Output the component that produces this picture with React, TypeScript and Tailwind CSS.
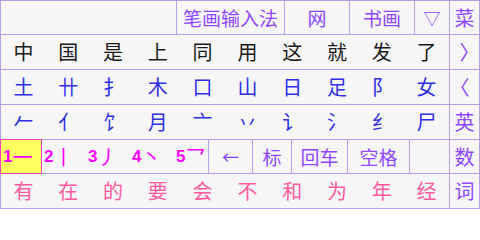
import React from "react";

const cjk = "font-['Noto_Sans_CJK_SC',sans-serif]";

function Cell({ ch, color }: { ch: string; color: string }) {
  return (
    <div className={`flex-1 flex items-center justify-center text-[20px] leading-none ${color}`}>
      {ch}
    </div>
  );
}

function Side({ ch, extra = "" }: { ch: string; extra?: string }) {
  return (
    <div className={`w-[30px] shrink-0 border-l border-[#b99cf3] flex items-center justify-center text-[20px] leading-none text-[#9147ff] ${extra}`}>
      {ch}
    </div>
  );
}

export default function App() {
  const row2 = ["中", "国", "是", "上", "同", "用", "这", "就", "发", "了"];
  const row3 = ["土", "卄", "扌", "木", "口", "山", "日", "足", "阝", "女"];
  const row4 = ["𠂉", "亻", "饣", "月", "亠", "丷", "讠", "氵", "纟", "尸"];
  const row6 = ["有", "在", "的", "要", "会", "不", "和", "为", "年", "经"];
  const strokes = [
    ["2", "丨"],
    ["3", "丿"],
    ["4", "丶"],
    ["5", "乛"],
  ];
  return (
    <div className={`w-[480px] h-[209px] bg-[#f6f6f6] border border-[#b99cf3] flex flex-col ${cjk}`}>
      {/* row 1 */}
      <div className="h-[34px] border-b border-[#b99cf3] flex">
        <div className="w-[448px] flex text-[#9147ff] text-[19px] leading-none">
          <div className="w-[176px] border-r border-[#b99cf3]" />
          <div className="w-[108px] border-r border-[#b99cf3] flex items-center justify-center">笔画输入法</div>
          <div className="w-[65px] border-r border-[#b99cf3] flex items-center justify-center">网</div>
          <div className="w-[65px] border-r border-[#b99cf3] flex items-center justify-center">书画</div>
          <div className="flex-1 flex items-center justify-center text-[17px]">▽</div>
        </div>
        <Side ch="菜" />
      </div>
      {/* row 2 */}
      <div className="h-[35px] border-b border-[#b99cf3] flex">
        <div className="w-[448px] flex">
          {row2.map((c) => (
            <Cell key={c} ch={c} color="text-[#1a1a1a]" />
          ))}
        </div>
        <Side ch="〉" extra="pl-[10px] text-[17px]" />
      </div>
      {/* row 3 */}
      <div className="h-[35px] border-b border-[#b99cf3] flex">
        <div className="w-[448px] flex">
          {row3.map((c) => (
            <Cell key={c} ch={c} color="text-[#3030e6]" />
          ))}
        </div>
        <Side ch="〈" extra="pr-[10px] text-[17px]" />
      </div>
      {/* row 4 */}
      <div className="h-[35px] border-b border-[#b99cf3] flex">
        <div className="w-[448px] flex">
          {row4.map((c) => (
            <Cell key={c} ch={c} color="text-[#3030e6]" />
          ))}
        </div>
        <Side ch="英" />
      </div>
      {/* row 5 */}
      <div className="h-[34px] border-b border-[#b99cf3] flex">
        <div className="w-[448px] flex">
          <div className="relative z-10 w-[42px] h-[35px] -ml-px -mt-px shrink-0 bg-[#ffff60] border border-[#ff40c0] flex items-center pl-[2px] text-[#ff00ff]">
            <span className="font-['Liberation_Sans',sans-serif] font-bold text-[17px] leading-none">1</span>
            <span className="text-[20px] leading-none">一</span>
          </div>
          <div className="w-[167px] border-r border-[#b99cf3] flex items-center pl-[2px] text-[#ff00ff] overflow-hidden">
            {strokes.map(([d, s]) => (
              <div key={d} className="w-[44px] shrink-0 flex items-center">
                <span className="font-['Liberation_Sans',sans-serif] font-bold text-[17px] leading-none">{d}</span>
                <span className="text-[20px] leading-none">{s}</span>
              </div>
            ))}
          </div>
          <div className="w-[44px] border-r border-[#b99cf3] flex items-center justify-center text-[17px] leading-none text-[#8040ff]">←</div>
          <div className="w-[39px] border-r border-[#b99cf3] flex items-center justify-center text-[19px] leading-none text-[#9147ff]">标</div>
          <div className="w-[56px] border-r border-[#b99cf3] flex items-center justify-center text-[19px] leading-none text-[#9147ff]">回车</div>
          <div className="w-[62px] border-r border-[#b99cf3] flex items-center justify-center text-[19px] leading-none text-[#9147ff]">空格</div>
          <div className="flex-1" />
        </div>
        <Side ch="数" />
      </div>
      {/* row 6 */}
      <div className="h-[34px] flex">
        <div className="w-[448px] flex">
          {row6.map((c) => (
            <Cell key={c} ch={c} color="text-[#ff5c9e]" />
          ))}
        </div>
        <Side ch="词" />
      </div>
    </div>
  );
}
